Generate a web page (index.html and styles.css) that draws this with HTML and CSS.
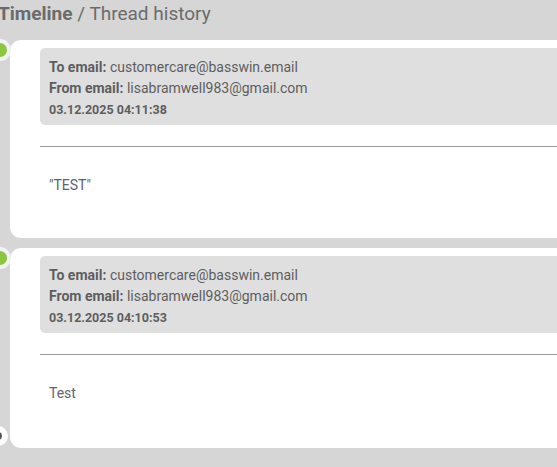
FILE: index.html
```html
<!DOCTYPE html>
<html>
<head>
<meta charset="utf-8">
<link rel="stylesheet" href="styles.css">
</head>
<body>
<div class="page">
  <h1 class="title"><span class="title-main">Timeline</span> / Thread history</h1>
  <div class="timeline">
    <div class="card">
      <span class="dot"></span>
      <div class="meta">
        <div class="meta-line"><b>To email:</b> customercare@basswin.email</div>
        <div class="meta-line"><b>From email:</b> lisabramwell983@gmail.com</div>
        <div class="meta-date">03.12.2025 04:11:38</div>
      </div>
      <hr class="divider">
      <div class="body-text">"TEST"</div>
    </div>
    <div class="card card-last">
      <span class="dot"></span>
      <div class="meta">
        <div class="meta-line"><b>To email:</b> customercare@basswin.email</div>
        <div class="meta-line"><b>From email:</b> lisabramwell983@gmail.com</div>
        <div class="meta-date">03.12.2025 04:10:53</div>
      </div>
      <hr class="divider">
      <div class="body-text">Test</div>
      <span class="end-dot"></span>
    </div>
  </div>
</div>
</body>
</html>
```
FILE: styles.css
```css
html, body {
  margin: 0;
  padding: 0;
  background: #d6d6d6;
  overflow: hidden;
  font-family: Roboto, "Liberation Sans", sans-serif;
  color: #666;
}
.page {
  width: 700px;
}
.title {
  margin: 0 0 0 -2px;
  padding-top: 2px;
  height: 38px;
  font-size: 19px;
  line-height: 24px;
  font-weight: 400;
  color: #6b6b6b;
}
.title-main {
  font-weight: 700;
}
.timeline {
  padding-left: 10px;
  display: flex;
  flex-direction: column;
  gap: 10px;
}
.card {
  position: relative;
  background: #fff;
  border-radius: 11px;
  padding: 8px 0 0 30px;
  height: 190px;
}
.card-last {
  height: 192px;
}
.dot {
  position: absolute;
  left: -21px;
  top: -1px;
  width: 14px;
  height: 14px;
  border-radius: 50%;
  background: #8cc63f;
  border: 4px solid #f2f2f2;
}
.end-dot {
  position: absolute;
  left: -22px;
  top: 178px;
  width: 8px;
  height: 8px;
  border-radius: 50%;
  background: #555;
  border: 6px solid #fff;
}
.meta {
  background: #dfdfe0;
  border-radius: 5px;
  padding: 9px 9px 0;
  height: 68px;
  font-size: 14px;
  line-height: 21px;
  color: #5e5e5e;
}
.meta b {
  font-weight: 700;
}
.meta-date {
  font-size: 12.5px;
  font-weight: 700;
  line-height: 22px;
}
.divider {
  margin: 21px 0 0;
  border: 0;
  border-top: 1px solid #9a9a9a;
  height: 0;
}
.body-text {
  padding: 30px 0 0 9px;
  font-size: 14px;
  line-height: 16px;
  color: #5d6470;
}
```
